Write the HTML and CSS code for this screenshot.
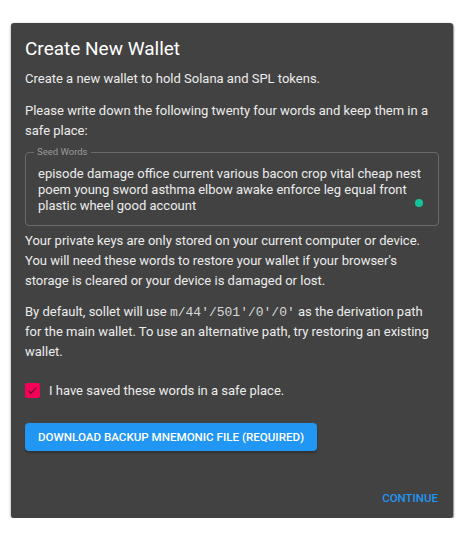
FILE: index.html
```html
<!DOCTYPE html>
<html lang="en">
<head>
    <meta charset="UTF-8">
    <meta name="viewport" content="width=device-width, initial-scale=1.0">
    <title>Create New Wallet</title>
    <link rel="stylesheet" href="styles.css">
</head>
<body>
    <div class="card">
        <div class="card-content">
            <h2 class="title">Create New Wallet</h2>
            <p class="text first">Create a new wallet to hold Solana and SPL tokens.</p>
            <p class="text">Please write down the following twenty four words and keep them in a safe place:</p>

            <fieldset class="seed-field">
                <legend class="seed-label">Seed Words</legend>
                <div class="seed-words">episode damage office current various bacon crop vital cheap nest poem young sword asthma elbow awake enforce leg equal front plastic wheel good account</div>
                <span class="grammar-dot"></span>
            </fieldset>

            <p class="text after-field">Your private keys are only stored on your current computer or device. You will need these words to restore your wallet if your browser's storage is cleared or your device is damaged or lost.</p>
            <p class="text path-note">By default, sollet will use <code>m/44'/501'/0'/0'</code> as the derivation path for the main wallet. To use an alternative path, try restoring an existing wallet.</p>

            <label class="check-row">
                <span class="checkbox">
                    <svg viewBox="0 0 24 24" width="13" height="13"><path d="M4.5 12.5l4.5 4.5 10-10" fill="none" stroke="#7a0a2e" stroke-width="2.4"/></svg>
                </span>
                <span class="check-label">I have saved these words in a safe place.</span>
            </label>

            <button class="download-btn">Download Backup Mnemonic File (Required)</button>
        </div>
        <div class="card-actions">
            <button class="text-btn">Continue</button>
        </div>
    </div>
</body>
</html>
```

FILE: styles.css
```css
body {
    margin: 0;
    background: #fff;
    font-family: Roboto, "Noto Sans", sans-serif;
}
.card {
    width: 442px;
    height: 495px;
    margin: 23px 0 0 11px;
    background-color: #424242;
    border-radius: 3px;
    box-shadow: 0 1px 3px rgba(0, 0, 0, 0.4), 1px 1px 1px rgba(0, 0, 0, 0.3);
    display: flex;
    flex-direction: column;
    box-sizing: border-box;
}
.card-content {
    padding: 12px 14px 0 14px;
    flex: 1;
}
.title {
    margin: 0;
    font-size: 19px;
    font-weight: 400;
    line-height: 28px;
    color: #fff;
}
.text {
    margin: 12px 0 0 0;
    font-size: 13px;
    line-height: 20px;
    color: #ececec;
}
.text.first {
    margin-top: 6px;
}
.text.after-field {
    margin-top: 5px;
}
.text.path-note {
    margin-top: 11px;
}
code {
    font-family: "Liberation Mono", "DejaVu Sans Mono", monospace;
    font-size: 13px;
    line-height: 1;
    color: #d8d8d8;
}
.seed-field {
    position: relative;
    margin: 6px 0 0 0;
    padding: 9px 12px 10px 12px;
    border: 1px solid #6a6a6a;
    border-radius: 4px;
    height: 79px;
    box-sizing: border-box;
}
.seed-label {
    padding: 0 3px;
    margin-left: -4px;
    font-size: 9.5px;
    line-height: 10px;
    color: #9a9a9a;
}
.seed-words {
    font-size: 13px;
    line-height: 16px;
    color: #ececec;
}
.grammar-dot {
    position: absolute;
    right: 15px;
    bottom: 18px;
    width: 8px;
    height: 8px;
    border-radius: 50%;
    background: #15c39a;
}
.check-row {
    display: flex;
    align-items: center;
    gap: 9px;
    height: 20px;
    margin-top: 18px;
}
.checkbox {
    width: 15px;
    height: 15px;
    border-radius: 2px;
    background: #f50057;
    display: flex;
    align-items: center;
    justify-content: center;
}
.check-label {
    font-size: 13px;
    color: #ececec;
}
.download-btn {
    display: block;
    margin-top: 23px;
    height: 28px;
    padding: 0 13px;
    border: none;
    border-radius: 4px;
    background: #2196f3;
    color: #fff;
    font-family: Roboto, "Noto Sans", sans-serif;
    font-size: 11.6px;
    font-weight: 500;
    text-transform: uppercase;
    box-shadow: 0 2px 2px rgba(0, 0, 0, 0.25);
}
.card-actions {
    display: flex;
    justify-content: flex-end;
    padding: 0 15px 13px 0;
}
.text-btn {
    border: none;
    background: none;
    padding: 0;
    color: #2196f3;
    font-family: Roboto, "Noto Sans", sans-serif;
    font-size: 11.5px;
    font-weight: 500;
    text-transform: uppercase;
}
```
